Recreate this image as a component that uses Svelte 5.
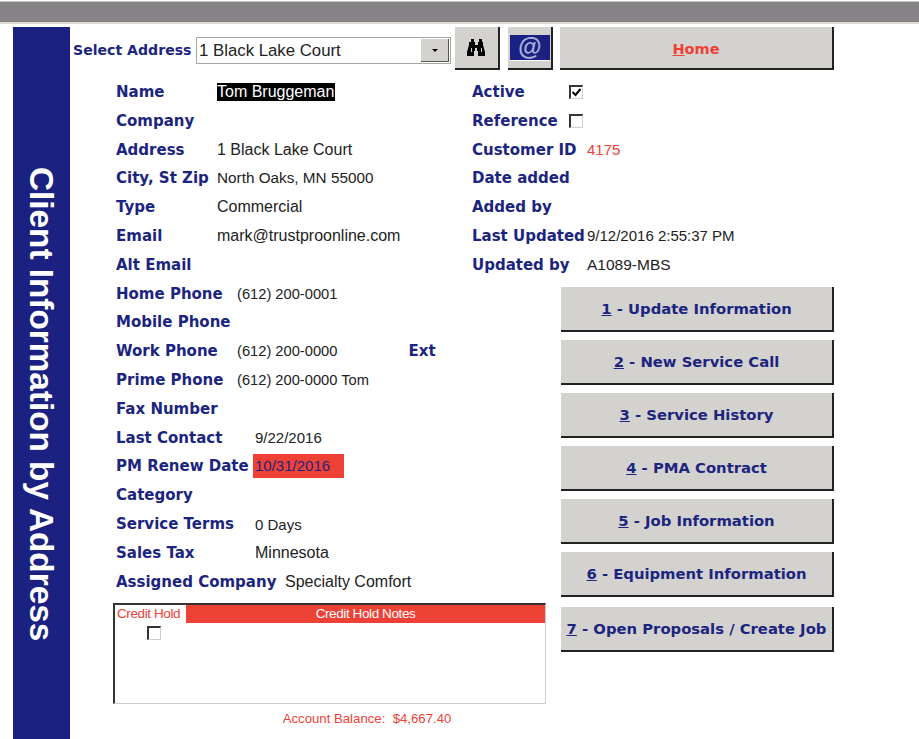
<script>
  const leftRows = [
    { label: "Name", value: "Tom Bruggeman", kind: "selected" },
    { label: "Company" },
    { label: "Address", value: "1 Black Lake Court" },
    { label: "City, St Zip", value: "North Oaks, MN 55000", kind: "mixed" },
    { label: "Type", value: "Commercial" },
    { label: "Email", value: "mark@trustproonline.com" },
    { label: "Alt Email" },
    { label: "Home Phone", value: "(612) 200-0001", kind: "phone" },
    { label: "Mobile Phone" },
    { label: "Work Phone", value: "(612) 200-0000", kind: "phone", ext: true },
    { label: "Prime Phone", value: "(612) 200-0000 Tom", kind: "phone" },
    { label: "Fax Number" },
    { label: "Last Contact", value: "9/22/2016", kind: "date num" },
    { label: "PM Renew Date", value: "10/31/2016", kind: "date num alert" },
    { label: "Category" },
    { label: "Service Terms", value: "0 Days", kind: "date num" },
    { label: "Sales Tax", value: "Minnesota", kind: "date" },
    { label: "Assigned Company", value: "Specialty Comfort", kind: "assigned" },
  ];

  const actions = [
    { key: "1", text: " - Update Information" },
    { key: "2", text: " - New Service Call" },
    { key: "3", text: " - Service History" },
    { key: "4", text: " - PMA Contract" },
    { key: "5", text: " - Job Information" },
    { key: "6", text: " - Equipment Information" },
    { key: "7", text: " - Open Proposals / Create Job" },
  ];
</script>

<div class="topbar"></div>

<div class="page">
  <aside class="sidebar"><span>Client Information by Address</span></aside>

  <main class="content">
    <div class="toolbar">
      <span class="select-label">Select Address</span>
      <div class="combo">
        <span>1 Black Lake Court</span>
        <div class="combo-btn"><i></i></div>
      </div>
      <button class="btn icon-btn" aria-label="Find">
        <svg width="19" height="18" viewBox="0 0 19 18">
          <path d="M4 0h3v3h1v3h3V3h1V0h3v3h1v3l2 7v4h-7v-5h-1V9H8v3H7v5H0v-4l2-7V3h2z" fill="#000" />
          <path d="M4 9h1v4H4zM14 9h1v4h-1z" fill="#d4d2ce" />
        </svg>
      </button>
      <button class="btn icon-btn" aria-label="Email">
        <span class="at">@</span>
      </button>
      <button class="btn home"><u>H</u>ome</button>
    </div>

    <div class="columns">
      <div class="left">
        <div class="rows">
          {#each leftRows as row}
            <div class="row {row.kind ?? ''}">
              <span class="label">{row.label}</span>
              {#if row.value}<span class="value">{row.value}</span>{/if}
              {#if row.ext}<span class="label ext">Ext</span>{/if}
            </div>
          {/each}
        </div>

        <div class="hold">
          <div class="hold-head">
            <span class="hold-title">Credit Hold</span>
            <span class="hold-notes">Credit Hold Notes</span>
          </div>
          <div class="check hold-check"></div>
        </div>
        <div class="balance">Account Balance:&nbsp; $4,667.40</div>
      </div>

      <div class="right">
        <div class="info">
          <div class="row"><span class="label">Active</span><div class="check on">
            <svg width="11" height="11" viewBox="0 0 11 11"><path d="M1.5 5l3 3 5-6" fill="none" stroke="#000" stroke-width="2" /></svg>
          </div></div>
          <div class="row"><span class="label">Reference</span><div class="check"></div></div>
          <div class="row"><span class="label">Customer ID</span><span class="value red">4175</span></div>
          <div class="row"><span class="label">Date added</span></div>
          <div class="row"><span class="label">Added by</span></div>
          <div class="row"><span class="label">Last Updated</span><span class="value updated">9/12/2016 2:55:37 PM</span></div>
          <div class="row"><span class="label">Updated by</span><span class="value by">A1089-MBS</span></div>
        </div>

        <div class="actions">
          {#each actions as action}
            <button class="btn action"><u>{action.key}</u>{action.text}</button>
          {/each}
        </div>
      </div>
    </div>
  </main>
</div>

<style>
  :global(body) {
    margin: 0;
    background: #fff;
  }
  .topbar {
    height: 20px;
    margin-top: 1px;
    margin-bottom: 3px;
    background: #858386;
    border-top: 1px solid #c8c6c4;
    border-bottom: 2px solid #dddbd6;
  }
  .page {
    display: flex;
    height: 713px;
    padding-left: 13px;
    border-bottom: 1px solid #d8d6d0;
    box-sizing: border-box;
    font-family: "Liberation Sans", Arial, sans-serif;
  }
  .sidebar {
    width: 57px;
    flex: none;
    background: #1b2180;
    color: #fff;
    display: flex;
    justify-content: center;
    padding-top: 140px;
    box-sizing: border-box;
  }
  .sidebar span {
    writing-mode: vertical-rl;
    font-size: 33.3px;
    font-weight: 700;
    line-height: 1;
    white-space: nowrap;
    height: 474px;
  }
  .content {
    flex: 1;
    padding-left: 3px;
  }
  .toolbar {
    display: flex;
    align-items: flex-start;
    height: 50px;
  }
  .select-label {
    font-family: "DejaVu Sans", sans-serif;
    font-weight: 700;
    font-size: 14.1px;
    color: #1b2580;
    margin-top: 15px;
    width: 123px;
    flex: none;
    white-space: nowrap;
  }
  .combo {
    width: 255px;
    height: 27px;
    margin-top: 10px;
    flex: none;
    box-sizing: border-box;
    border: 1px solid #a8a6a4;
    display: flex;
    align-items: center;
    justify-content: space-between;
    padding: 0 1px 0 2px;
    font-size: 16.8px;
    color: #222;
  }
  .combo-btn {
    width: 28px;
    height: 23px;
    background: #d4d2ce;
    border-right: 1px solid #555;
    border-bottom: 1px solid #555;
    display: flex;
    align-items: center;
    justify-content: center;
    box-sizing: border-box;
  }
  .combo-btn i {
    border: 3px solid transparent;
    border-top: 3px solid #000;
    border-bottom: 0;
  }
  .btn {
    background: #d4d2ce;
    border: 0;
    border-right: 2px solid #222;
    border-bottom: 2px solid #222;
    box-sizing: border-box;
    padding: 0;
    font-family: "DejaVu Sans", sans-serif;
    font-weight: 700;
    color: #1b2580;
    cursor: pointer;
  }
  .icon-btn {
    width: 45px;
    height: 43px;
    margin-left: 8px;
    display: flex;
    align-items: center;
    justify-content: center;
    flex: none;
  }
  .combo + .icon-btn {
    margin-left: 4px;
  }
  .at {
    width: 40px;
    height: 25px;
    background: #1b2180;
    border-bottom: 1px solid #fff;
    color: #aab2dc;
    font-family: "Liberation Sans", sans-serif;
    font-style: italic;
    font-size: 24px;
    font-weight: 700;
    line-height: 24px;
    text-align: center;
    display: block;
  }
  .home {
    width: 274px;
    height: 43px;
    margin-left: 7px;
    padding-top: 2px;
    flex: none;
    color: #ee4136;
    font-size: 14.5px;
  }
  .columns {
    display: flex;
  }
  .left {
    width: 433px;
    flex: none;
    margin-left: 40px;
  }
  .rows {
    padding-left: 3px;
  }
  .row {
    display: flex;
    align-items: center;
    height: 28.82px;
    padding-top: 1px;
    box-sizing: border-box;
    white-space: nowrap;
  }
  .label {
    font-family: "DejaVu Sans", sans-serif;
    font-size: 15px;
    font-weight: 700;
    color: #1b2580;
    width: 101px;
    flex: none;
  }
  .value {
    font-size: 16px;
    color: #222;
  }
  .selected .value {
    background: #000;
    color: #fff;
    padding-right: 1px;
    line-height: 18px;
  }
  .mixed .value { font-size: 15.3px; }
  .phone .label { width: 121px; }
  .phone .value { font-size: 14.7px; }
  .date .label { width: 139px; }
  .num .value { font-size: 15px; }
  .assigned .label { width: 169px; }
  .alert .value {
    background: #ee4136;
    color: #1b2580;
    width: 91px;
    margin-left: -2px;
    padding-left: 2px;
    line-height: 24px;
    box-sizing: border-box;
  }
  .label.ext {
    width: auto;
    margin-left: 71px;
  }
  .hold {
    height: 101px;
    margin-top: 7px;
    width: 433px;
    box-sizing: border-box;
    border: 1px solid #cfcdcb;
    border-top: 2px solid #333;
    border-left: 2px solid #333;
  }
  .hold-head {
    display: flex;
    height: 18px;
    font-size: 13.5px;
    line-height: 18px;
    letter-spacing: -0.4px;
  }
  .hold-title {
    width: 71px;
    padding-left: 2px;
    box-sizing: border-box;
    color: #ee4136;
  }
  .hold-notes {
    flex: 1;
    background: #ee4136;
    color: #fff;
    text-align: center;
  }
  .check {
    width: 14px;
    height: 14px;
    box-sizing: border-box;
    border: 1px solid #d0cec9;
    border-top: 2px solid #333;
    border-left: 2px solid #333;
    display: flex;
    align-items: center;
    justify-content: center;
    background: #fff;
  }
  .hold-check {
    margin: 3px 0 0 32px;
  }
  .balance {
    margin-top: 7px;
    text-align: center;
    padding-left: 75px;
    box-sizing: border-box;
    font-size: 13.2px;
    color: #ee4136;
  }
  .right {
    margin-left: -74px;
    width: 400px;
  }
  .info .label { width: 97px; }
  .info .value { margin-left: 18px; font-size: 15px; }
  .info .value.red { color: #ee4136; }
  .info .value.by { font-size: 15.5px; }
  .actions {
    display: flex;
    flex-direction: column;
    gap: 8px;
    margin-top: 8px;
    margin-left: 89px;
  }
  .action {
    width: 273px;
    height: 45px;
    font-size: 14.8px;
    white-space: nowrap;
  }
  .action:last-child {
    margin-top: 2px;
  }
</style>
